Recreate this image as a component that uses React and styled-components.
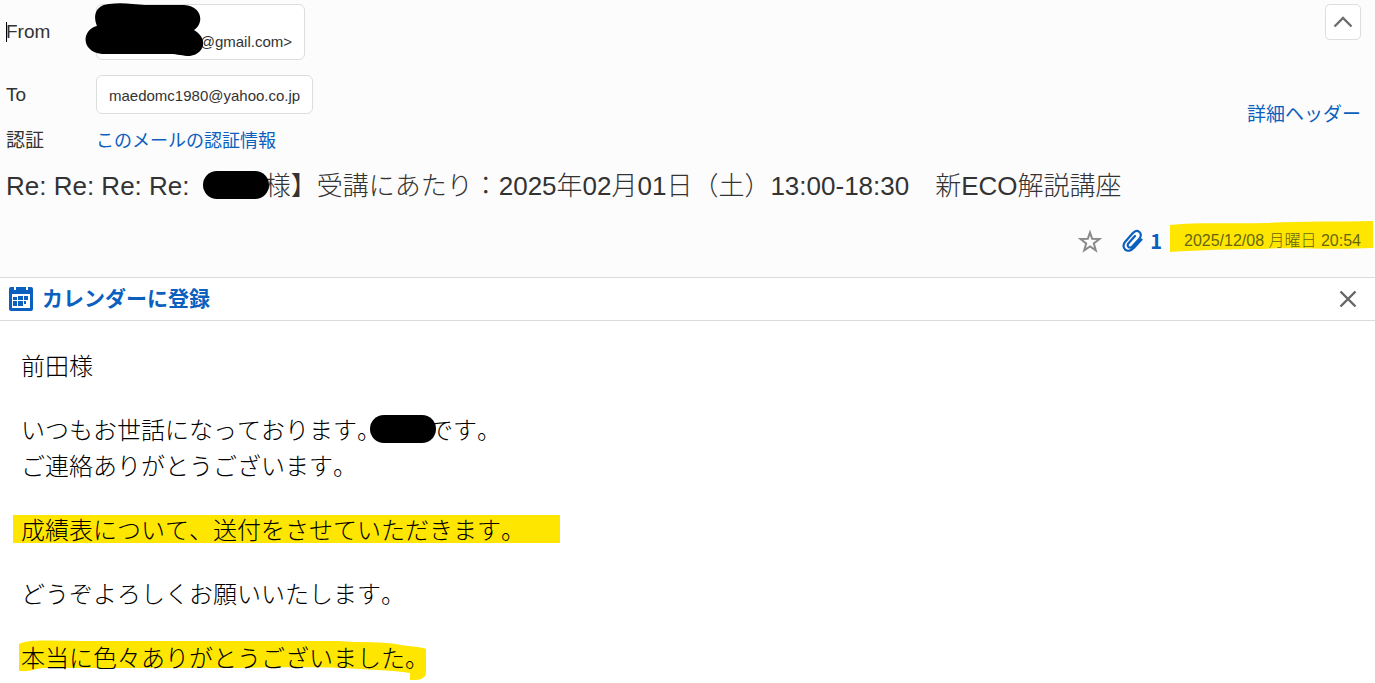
import React from 'react'
import styled, { createGlobalStyle } from 'styled-components'

const GlobalStyles = createGlobalStyle`

    * {

        box-sizing: border-box;
    }

    body {

        margin: 0;

        background: #fff;
        color: #333;
        font-family: "Liberation Sans", "Noto Sans CJK JP", sans-serif;
        font-weight: 300;
    }

    button {

        padding: 0;
        border: none;

        background: none;
        font: inherit;
        cursor: pointer;
    }
`

const MailHeader = styled.header`

    padding: 4px 14px 18px 6px;
    border-bottom: 1px solid #dcdcdc;

    background: #fcfcfc;
`

const HeaderTop = styled.div`

    display: flex;
    justify-content: space-between;
`

const Fields = styled.dl`

    display: grid;
    grid-template-columns: 90px auto;
    align-items: center;
    row-gap: 15px;

    margin: 0;
    font-size: 19px;
    line-height: 24px;
`

const FieldLabel = styled.dt`

    position: relative;

    font-weight: 400;

    ${({ $caret }) => $caret && `
        &::before {

            content: '';
            position: absolute;
            top: 2px;
            left: 0;

            width: 1px;
            height: 20px;

            background: #000;
        }
    `}
`

const FieldValue = styled.dd`

    margin: 0;
`

const Chip = styled.span`

    position: relative;

    display: flex;
    flex-direction: column;
    align-items: flex-end;
    justify-content: flex-end;

    width: fit-content;
    min-width: ${({ $wide }) => $wide ? '209px' : '0'};
    min-height: ${({ $wide }) => $wide ? '56px' : '39px'};
    padding: 7px 12px;
    border: 1px solid #ddd;
    border-radius: 6px;

    background: #fff;
    font-size: 15px;
    line-height: 20px;
`

const Link = styled.a`

    color: #0b5fbe;
    font-size: ${({ $size }) => $size};
    font-weight: 400;
    line-height: 24px;
    text-decoration: none;
`

const HeaderSide = styled.div`

    display: flex;
    flex-direction: column;
    align-items: flex-end;
    gap: 63px;
`

const CollapseButton = styled.button`

    display: grid;
    place-items: center;

    width: 36px;
    height: 36px;

    && {

        border: 1px solid #ddd;
        border-radius: 5px;
        background: #fff;
    }
`

const Subject = styled.h1`

    margin: 15px 0 0;

    font-size: 26px;
    font-weight: 300;
    line-height: 36px;
`

const Meta = styled.div`

    display: flex;
    align-items: center;
    justify-content: flex-end;

    margin-top: 19px;
    height: 36px;
`

const StarButton = styled.button`

    display: grid;
    margin-right: 20px;
`

const Attachment = styled.button`

    display: flex;
    align-items: center;
    gap: 6px;

    margin-right: 22px;

    && {

        color: #0b5fbe;
        font-family: "Noto Sans CJK JP", sans-serif;
        font-size: 20px;
        font-weight: bold;
        line-height: 24px;
    }
`

const Marked = styled.span`

    position: relative;
    z-index: 0;

    display: inline-block;
`

const Marker = styled.svg`

    position: absolute;
    top: ${({ $top }) => $top};
    left: ${({ $left }) => $left};
    z-index: -1;

    fill: #ffe600;
`

const SentAt = styled.time`

    color: #66660f;
    font-size: 16px;
    line-height: 24px;
`

const Redacted = styled.span`

    position: relative;

    display: inline-block;

    width: 66px;
    height: 28px;
    margin: ${({ $margin }) => $margin};
    border-radius: 14px;

    background: #000;
    vertical-align: -4px;
`

const Scribble = styled.svg`

    position: absolute;
    top: -3px;
    left: -12px;
`

const CalendarBar = styled.div`

    display: flex;
    align-items: center;
    justify-content: space-between;

    height: 43px;
    padding: 0 18px 0 8px;
    border-bottom: 1px solid #dcdcdc;
`

const CalendarButton = styled.button`

    display: flex;
    align-items: center;
    gap: 8px;

    && {

        color: #0b5fbe;
        font-size: 21px;
        font-weight: bold;
        line-height: 24px;
    }
`

const CloseButton = styled.button`

    display: grid;
`

const MailBody = styled.main`

    padding: 26px 21px 6px;

    color: #000;
    font-family: "Noto Sans CJK JP", sans-serif;
    font-size: 24px;
    font-kerning: none;
    line-height: 36px;

    p {

        margin: 0 0 28px;
    }

    p:last-child {

        margin-bottom: 0;
    }
`

const ChevronIcon = () => (
    <svg width="20" height="14" viewBox="0 0 20 14" fill="none" stroke="#6e6e6e" strokeWidth="2.4">
        <path d="M1.500 11.500 10 3l8.500 8.500" />
    </svg>
)

const StarIcon = () => (
    <svg width="24" height="24" viewBox="0 0 24 24" fill="none" stroke="#8a8a8a" strokeWidth="2">
        <path d="m12 3.500 2.200 6.300 7.300.2-5.700 4.400 2 7L12 17.400l-5.800 4 2-7L2.500 10l7.300-.2Z" />
    </svg>
)

const ClipIcon = () => (
    <svg width="22" height="24" viewBox="0 0 22 24" fill="none" stroke="#0b5fbe" strokeWidth="2.2" strokeLinecap="round">
        <path d="M19.500 10.500 12 18.800C9 22 5.500 22.600 3.200 20.600c-2.400-2.100-2.200-5.300.2-8L10.700 4.300c2.100-2.400 4.800-2.900 6.700-1.300 2 1.700 1.900 4.400 0 6.600l-6.900 7.700c-1.300 1.500-2.900 1.700-4 .7-1.200-1-1-2.700.2-4L13 7" />
    </svg>
)

const CalendarIcon = () => (
    <svg width="26" height="26" viewBox="0 0 26 26">
        <path fill="#0b5fbe" fillRule="evenodd" d="M3 1h3v3h2V1h10v3h2V1h3a2 2 0 0 1 2 2v20a2 2 0 0 1-2 2H3a2 2 0 0 1-2-2V3a2 2 0 0 1 2-2ZM4 8v14h18V8Z" />
        <path fill="#0b5fbe" d="M10 10h5v4h-5zM16 10h4v4h-4zM5 11h4v3H5zM5 15h4v5H5zM10 15h5v5h-5zM16 15h2v3h-2z" />
    </svg>
)

const CloseIcon = () => (
    <svg width="18" height="18" viewBox="0 0 18 18" fill="none" stroke="#666" strokeWidth="2.4">
        <path d="m1.500 1.500 15 15m0-15-15 15" />
    </svg>
)

const App = () => {

    return (
        <>
            <GlobalStyles />
            <MailHeader>
                <HeaderTop>
                    <Fields>
                        <FieldLabel $caret>From</FieldLabel>
                        <FieldValue>
                            <Chip $wide>
                                @gmail.com&gt;
                                <Scribble width="122" height="54" viewBox="0 0 122 54">
                                    <path d="M24 2C36 0 48 2 60 3h39c19 1 20 19 10 25 15 9 10 24-4 26-8 0-12-2-20-2H17C-4 50-4 28 12 24 7 12 12 3 24 2Z" />
                                </Scribble>
                            </Chip>
                        </FieldValue>
                        <FieldLabel>To</FieldLabel>
                        <FieldValue>
                            <Chip>maedomc1980@yahoo.co.jp</Chip>
                        </FieldValue>
                        <FieldLabel>認証</FieldLabel>
                        <FieldValue>
                            <Link href="#auth" $size="18px">このメールの認証情報</Link>
                        </FieldValue>
                    </Fields>
                    <HeaderSide>
                        <CollapseButton aria-label="閉じる">
                            <ChevronIcon />
                        </CollapseButton>
                        <Link href="#headers" $size="19px">詳細ヘッダー</Link>
                    </HeaderSide>
                </HeaderTop>
                <Subject>
                    Re: Re: Re: Re: <Redacted $margin="0 -4px 0 6px" />様】受講にあたり：2025年02月01日（土）13:00-18:30　新ECO解説講座
                </Subject>
                <Meta>
                    <StarButton aria-label="スター">
                        <StarIcon />
                    </StarButton>
                    <Attachment>
                        <ClipIcon />
                        1
                    </Attachment>
                    <Marked>
                        <Marker $top="-8px" $left="-14px" width="203" height="32" viewBox="0 0 203 32">
                            <path d="M0 4C30 1 60 3 95 2 130 0 165 1 203 0v27c-45 2-80-1-110 1-35 0-60 1-93 3Z" />
                        </Marker>
                        <SentAt dateTime="2025-12-08T20:54">2025/12/08 月曜日 20:54</SentAt>
                    </Marked>
                </Meta>
            </MailHeader>
            <CalendarBar>
                <CalendarButton>
                    <CalendarIcon />
                    カレンダーに登録
                </CalendarButton>
                <CloseButton aria-label="閉じる">
                    <CloseIcon />
                </CloseButton>
            </CalendarBar>
            <MailBody>
                <p>前田様</p>
                <p>
                    いつもお世話になっております。<Redacted $margin="0 -7px 0 -11px" />です。<br />
                    ご連絡ありがとうございます。
                </p>
                <p>
                    <Marked>
                        <Marker $top="4px" $left="-8px" width="547" height="28" viewBox="0 0 547 28">
                            <path d="M0 0h547v28H0Z" />
                        </Marker>
                        成績表について、送付をさせていただきます。
                    </Marked>
                </p>
                <p>どうぞよろしくお願いいたします。</p>
                <p>
                    <Marked>
                        <Marker $top="1px" $left="-2px" width="408" height="41" viewBox="0 0 408 41">
                            <path d="M0 4C10-1 30 1 60 1h260c20 2 45 0 62 4 10 2 18 1 25 4v24c0 4-5 7-10 7h-6v-7c-20-3-35-3-51-4-50-3-90-1-140-1H25c-8 0-12 4-25 3Z" />
                        </Marker>
                        本当に色々ありがとうございました。
                    </Marked>
                </p>
            </MailBody>
        </>
    )
}

export default App
